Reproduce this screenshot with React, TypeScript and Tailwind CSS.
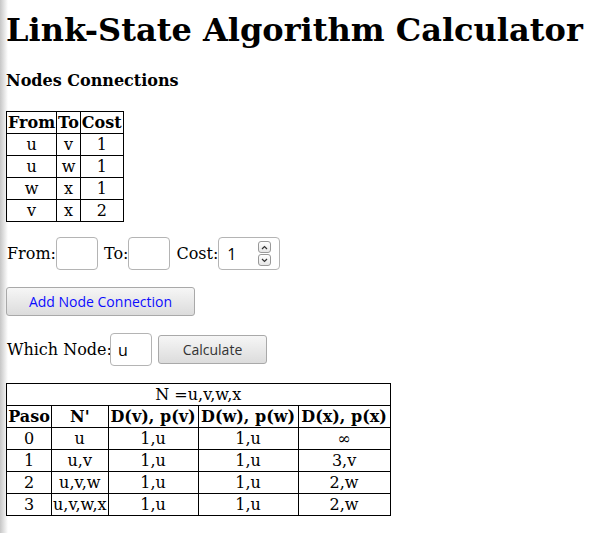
import React from 'react';

const serif = { fontFamily: '"DejaVu Serif", "Liberation Serif", serif' };

const links = [
  ['u', 'v', '1'],
  ['u', 'w', '1'],
  ['w', 'x', '1'],
  ['v', 'x', '2'],
];

const steps = [
  ['0', 'u', '1,u', '1,u', '∞'],
  ['1', 'u,v', '1,u', '1,u', '3,v'],
  ['2', 'u,v,w', '1,u', '1,u', '2,w'],
  ['3', 'u,v,w,x', '1,u', '1,u', '2,w'],
];

const cell = 'border border-black px-[1px] py-[1px] text-center leading-[19px]';

function Spinner() {
  return (
    <div className="flex flex-col gap-[1px]">
      <div className="flex h-[12px] w-[13px] items-center justify-center rounded-[3px] border border-[#999] bg-gradient-to-b from-white to-[#e6e6e6]">
        <svg width="7" height="5" viewBox="0 0 7 5">
          <path d="M1 4 L3.5 1.5 L6 4" fill="none" stroke="#333" strokeWidth="1.2" />
        </svg>
      </div>
      <div className="flex h-[12px] w-[13px] items-center justify-center rounded-[3px] border border-[#999] bg-gradient-to-b from-white to-[#e6e6e6]">
        <svg width="7" height="5" viewBox="0 0 7 5">
          <path d="M1 1 L3.5 3.5 L6 1" fill="none" stroke="#333" strokeWidth="1.2" />
        </svg>
      </div>
    </div>
  );
}

const inputCls =
  'h-[33px] w-[42px] rounded-[4px] border border-[#b4b4b4] bg-white text-[16px] font-["Open_Sans",sans-serif]';

const btnCls =
  'h-[29px] rounded-[3px] border border-[#a9a9a9] bg-gradient-to-b from-[#f6f6f6] to-[#dcdcdc] text-[14px] font-["Open_Sans",sans-serif]';

export default function App() {
  return (
    <div
      className="min-h-screen bg-[linear-gradient(to_right,#c6c6c6,#ffffff_8px)] pl-[6px] text-black"
      style={serif}
    >
      <h1 className="pt-[12px] text-[32px] font-bold leading-[37px]">
        Link-State Algorithm Calculator
      </h1>
      <h4 className="mt-[22px] text-[16px] font-bold leading-[19px]">Nodes Connections</h4>

      <table className="mt-[21px] border-collapse text-[16px]">
        <thead>
          <tr>
            <th className={cell}>From</th>
            <th className={cell}>To</th>
            <th className={cell}>Cost</th>
          </tr>
        </thead>
        <tbody>
          {links.map((r, i) => (
            <tr key={i}>
              {r.map((c, j) => (
                <td key={j} className={cell}>
                  {c}
                </td>
              ))}
            </tr>
          ))}
        </tbody>
      </table>

      <div className="mt-[15px] flex items-center text-[16px]">
        <span className="pl-[1px]">From:</span>
        <input className={inputCls} readOnly />
        <span className="ml-[6px]">To:</span>
        <input className={inputCls} readOnly />
        <span className="ml-[6px]">Cost:</span>
        <div className="flex h-[33px] w-[62px] items-center rounded-[4px] border border-[#b4b4b4] bg-white pl-[8px]">
          <span className="w-[31px] font-['Open_Sans',sans-serif] text-[16px]">1</span>
          <Spinner />
        </div>
      </div>

      <button className={`${btnCls} mt-[17px] w-[189px] text-[#0c0cff]`}>Add Node Connection</button>

      <div className="mt-[17px] flex items-center text-[16px]">
        <span className="-mr-[2px] pl-[1px]">Which Node:</span>
        <div className="flex h-[33px] w-[42px] items-center rounded-[4px] border border-[#b4b4b4] bg-white pl-[7px] font-['Open_Sans',sans-serif] text-[16px]">
          u
        </div>
        <button className={`${btnCls} ml-[6px] w-[109px] text-[#333]`}>Calculate</button>
      </div>

      <table className="mt-[17px] border-collapse text-[16px]">
        <thead>
          <tr>
            <td colSpan={5} className={cell}>
              N =u,v,w,x
            </td>
          </tr>
          <tr>
            <th className={`${cell} w-[45px]`}>Paso</th>
            <th className={`${cell} w-[56px]`}>N'</th>
            <th className={`${cell} w-[90px]`}>D(v), p(v)</th>
            <th className={`${cell} w-[100px]`}>D(w), p(w)</th>
            <th className={`${cell} w-[92px]`}>D(x), p(x)</th>
          </tr>
        </thead>
        <tbody>
          {steps.map((r, i) => (
            <tr key={i}>
              {r.map((c, j) => (
                <td key={j} className={cell}>
                  {c}
                </td>
              ))}
            </tr>
          ))}
        </tbody>
      </table>
    </div>
  );
}
